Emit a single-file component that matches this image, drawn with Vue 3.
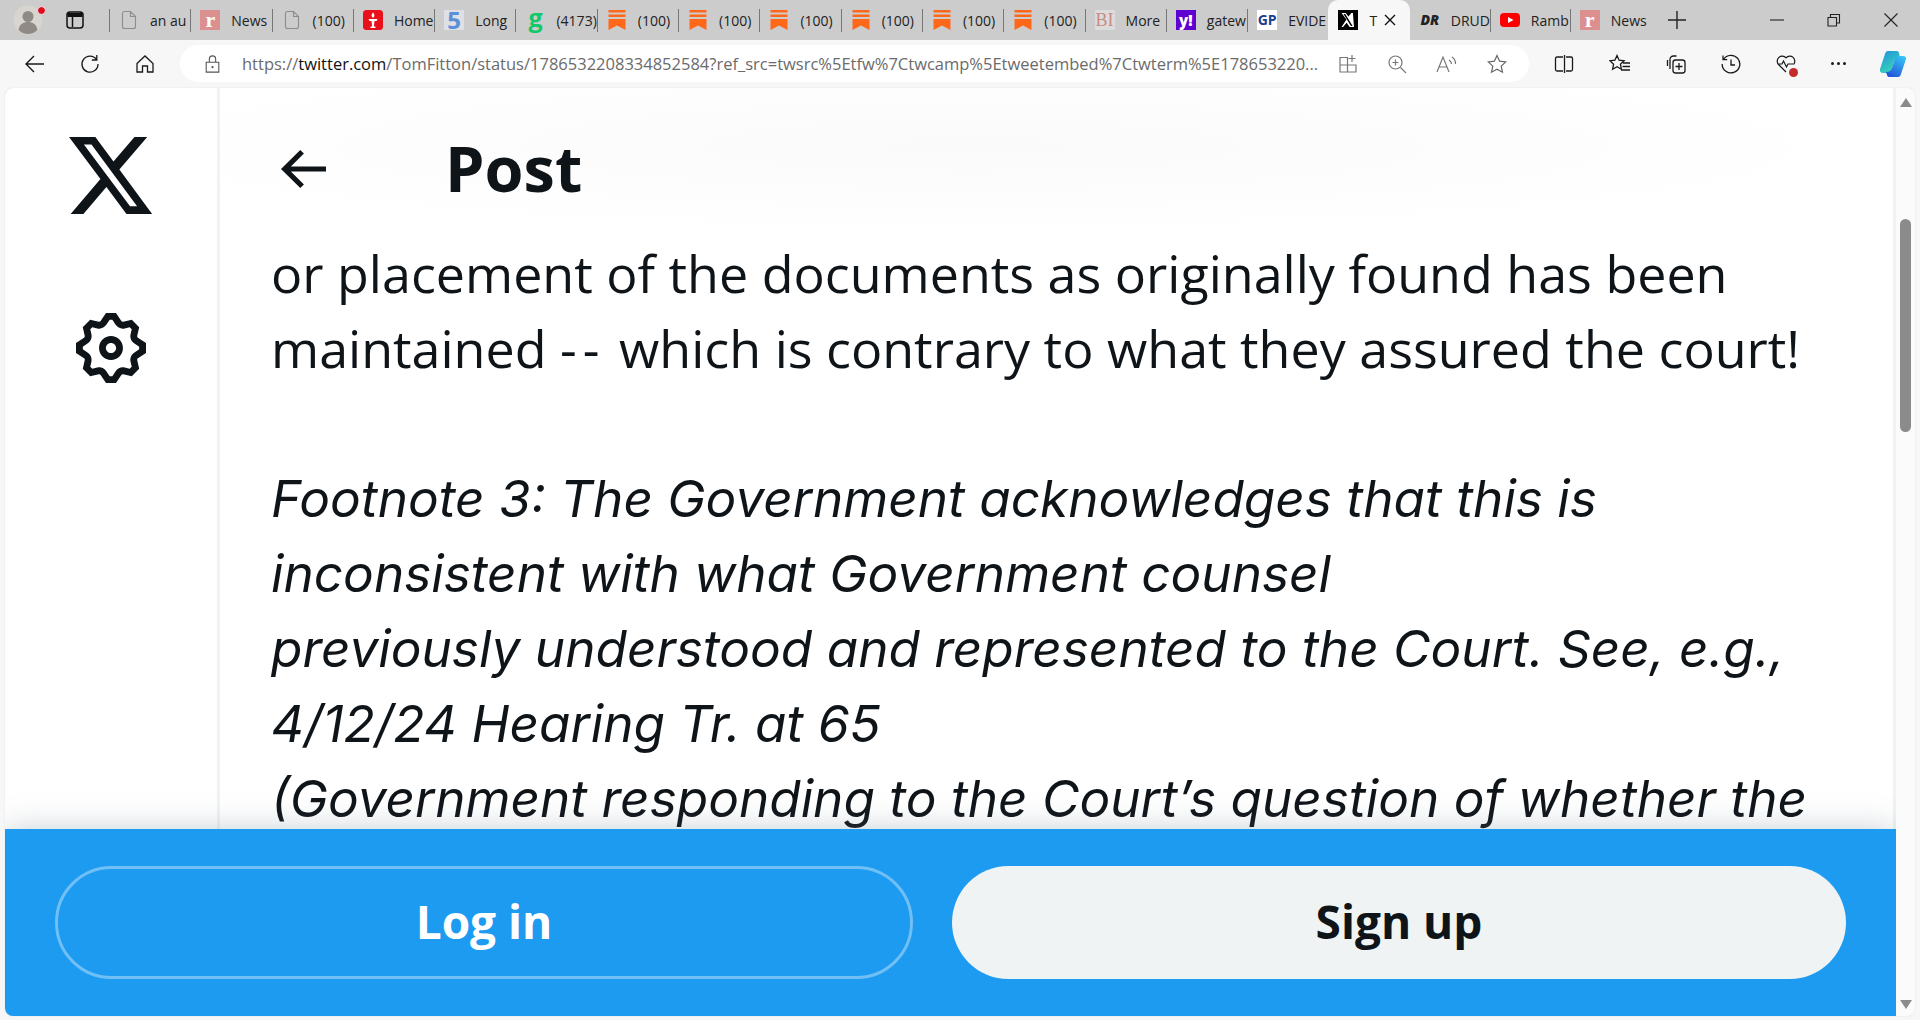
<template>
  <div class="win">
    <div class="tabs">
      <div class="tabs__lead">
        <div class="avatar">
          <svg viewBox="0 0 30 30" width="30" height="30">
            <circle cx="15" cy="15" r="14.5" fill="#d8d5d0" />
            <circle cx="15" cy="11.5" r="5.5" fill="#8f8a85" />
            <path d="M5.5 25c1-6 5-8 9.500-8s8.500 2 9.500 8c-2.500 2.600-6 4-9.500 4s-7-1.400-9.500-4z" fill="#8f8a85" />
          </svg>
          <span class="avatar__dot"></span>
        </div>
        <svg class="tabs__side" viewBox="0 0 20 20" width="20" height="20">
          <rect x="2" y="2" width="16" height="16" rx="3" fill="none" stroke="#111" stroke-width="1.500" />
          <path d="M2.500 3h15v4h-15z" fill="#111" />
          <path d="M7.500 7v10" stroke="#111" stroke-width="1.500" />
        </svg>
      </div>

      <div
        v-for="tab in tabs"
        :key="tab.id"
        :class="['tab', tab.active ? 'tab--active' : '', tab.tail ? 'tab--tail' : '']"
      >
        <span :class="['fav', 'fav--' + tab.icon]">
          <svg v-if="tab.icon === 'doc'" viewBox="0 0 20 20" width="20" height="20">
            <path d="M3.500 3.500a2 2 0 0 1 2-2h6l5 5v10a2 2 0 0 1-2 2h-9a2 2 0 0 1-2-2z M11.500 1.500v5h5" fill="none" stroke="#8c8c8c" stroke-width="1.100" />
          </svg>
          <svg v-else-if="tab.icon === 'torch'" viewBox="0 0 20 20" width="20" height="20">
            <rect width="20" height="20" rx="3.500" fill="#e8101a" />
            <path d="M10 2.500c1.800 2 2 3.500 0 5.500-2-2-1.800-3.500 0-5.500z" fill="#fff" />
            <path d="M5.500 9h9l-1 2h-2l-.6 5.500h1.600V18H7.500v-1.500h1.600l-.6-5.500h-2z" fill="#fff" />
          </svg>
          <svg v-else-if="tab.icon === 'sub'" viewBox="0 0 20 20" width="20" height="20">
            <path d="M1.500 0h17v2.500h-17zM1.500 4.500h17V7h-17zM1.500 9h17v11l-8.500-4.500L1.500 20z" fill="#ff6719" />
          </svg>
          <svg v-else-if="tab.icon === 'x'" viewBox="0 0 20 20" width="20" height="20">
            <rect width="20" height="20" fill="#000" />
            <path d="M14.900 3h-1.500l-3 3.600L7.800 3H3.500l4.900 6.600L3.600 17h1.500l3.500-4.200 3.100 4.200h4.300zM5.500 4h1.800l7.300 12h-1.700z" fill="#fff" />
          </svg>
          <svg v-else-if="tab.icon === 'yt'" viewBox="0 0 20 20" width="20" height="20">
            <rect y="3" width="20" height="14" rx="4" fill="#f00" />
            <path d="M8 7l5.500 3L8 13z" fill="#fff" />
          </svg>
          <template v-else>{{ tab.glyph }}</template>
        </span>
        <span class="tab__title">{{ tab.title }}</span>
        <svg v-if="tab.active" class="tab__close" viewBox="0 0 12 12" width="12" height="12">
          <path d="M1 1l10 10M11 1L1 11" stroke="#111" stroke-width="1.400" />
        </svg>
      </div>

      <svg class="tabs__new" viewBox="0 0 18 18" width="18" height="18">
        <path d="M9 0v18M0 9h18" stroke="#222" stroke-width="1.400" />
      </svg>

      <div class="winctl">
        <svg viewBox="0 0 14 14" width="14" height="14"><path d="M0 7h14" stroke="#222" stroke-width="1.100" /></svg>
        <svg viewBox="0 0 14 14" width="14" height="14"><path d="M1 4.500h8.500v8.500H1zM3.500 4.500V1.500h9v8.500h-3" fill="none" stroke="#222" stroke-width="1.100" /></svg>
        <svg viewBox="0 0 14 14" width="14" height="14"><path d="M.5.500l13 13M13.500.500l-13 13" stroke="#222" stroke-width="1.100" /></svg>
      </div>
    </div>

    <div class="toolbar">
      <div class="toolbar__nav">
        <svg viewBox="0 0 20 20" width="20" height="20"><path d="M1 10h18M9 2l-8 8 8 8" fill="none" stroke="#1a1a1a" stroke-width="1.400" /></svg>
        <svg viewBox="0 0 20 20" width="20" height="20"><path d="M16.500 5.500A8 8 0 1 0 18 10M16.800 1v5h-5" fill="none" stroke="#1a1a1a" stroke-width="1.300" /></svg>
        <svg viewBox="0 0 20 20" width="20" height="20"><path d="M2 9.500L10 2l8 7.500V18h-5.500v-6h-5v6H2z" fill="none" stroke="#1a1a1a" stroke-width="1.300" /></svg>
      </div>
      <div class="addr">
        <svg class="addr__lock" viewBox="0 0 16 20" width="15" height="18">
          <path d="M1 8h14v11H1zM4.500 8V4.500a3.500 3.500 0 0 1 7 0V8" fill="none" stroke="#555" stroke-width="1.200" />
          <circle cx="8" cy="13.500" r="1.200" fill="#555" />
        </svg>
        <span class="addr__url">https://<b>twitter.com</b>/TomFitton/status/1786532208334852584?ref_src=twsrc%5Etfw%7Ctwcamp%5Etweetembed%7Ctwterm%5E178653220...</span>
        <div class="addr__icons">
          <svg viewBox="0 0 20 20" width="20" height="20"><path d="M2 3.500h7.500V18H2zM9.500 11H18v7H9.500zM2 11h7.500M14 1v7M10.500 4.500h7" fill="none" stroke="#777" stroke-width="1.200" /></svg>
          <svg viewBox="0 0 20 20" width="20" height="20"><circle cx="8.500" cy="8.500" r="6.500" fill="none" stroke="#777" stroke-width="1.200" /><path d="M13.500 13.500l5.500 5.500M8.500 5.500v6M5.500 8.500h6" stroke="#777" stroke-width="1.200" /></svg>
          <svg viewBox="0 0 22 20" width="22" height="20"><path d="M1 18L7 3l6 15M3.200 13h7.600M13 6a5 5 0 0 1 2.500 4M16 3a8 8 0 0 1 3.500 7" fill="none" stroke="#777" stroke-width="1.200" /></svg>
          <svg viewBox="0 0 20 20" width="20" height="20"><path d="M10 1.500l2.600 5.700 6.200.7-4.600 4.200 1.300 6.100L10 15.200l-5.500 3 1.300-6.100L1.200 7.900l6.200-.7z" fill="none" stroke="#666" stroke-width="1.200" /></svg>
        </div>
      </div>
      <div class="toolbar__tools">
        <svg viewBox="0 0 20 20" width="20" height="20"><path d="M9 3H3a1.500 1.500 0 0 0-1.500 1.500v11A1.500 1.500 0 0 0 3 17h6M12 3h5a1.500 1.500 0 0 1 1.500 1.500v11A1.500 1.500 0 0 1 17 17h-5M10.500 1v18" fill="none" stroke="#1a1a1a" stroke-width="1.300" /></svg>
        <svg viewBox="0 0 22 20" width="22" height="20"><path d="M8 1.500l2.100 4.700 5 .6-3.700 3.400 1 5L8 12.700l-4.400 2.500 1-5L.9 6.800l5-.6zM14 9h7M13.500 12.500H21M12 16h9" fill="none" stroke="#1a1a1a" stroke-width="1.300" /></svg>
        <svg viewBox="0 0 20 20" width="20" height="20"><path d="M4 15V5.500A3.500 3.500 0 0 1 7.500 2h3M1.500 12V6" fill="none" stroke="#1a1a1a" stroke-width="1.300" /><rect x="7" y="6" width="12" height="13" rx="2.500" fill="none" stroke="#1a1a1a" stroke-width="1.300" /><path d="M13 9v7M9.500 12.500h7" stroke="#1a1a1a" stroke-width="1.300" /></svg>
        <svg viewBox="0 0 20 20" width="20" height="20"><path d="M2.500 5.500A8.800 8.800 0 1 1 1.200 10M2 1.500v4.200h4.200M10 5.500V11h4" fill="none" stroke="#1a1a1a" stroke-width="1.300" /></svg>
        <div class="health">
          <svg viewBox="0 0 20 20" width="20" height="20"><path d="M10 18L2.500 10.500a5 5 0 0 1 7.500-6.700 5 5 0 0 1 7.500 6.700M1.500 10H6l1.500-3 3 6 1.500-3h5" fill="none" stroke="#1a1a1a" stroke-width="1.200" /></svg>
          <span class="health__dot"></span>
        </div>
        <span class="dots">
          <i></i><i></i><i></i>
        </span>
      </div>
      <svg class="copilot" viewBox="0 0 28 28" width="28" height="28">
        <defs>
          <linearGradient id="cpa" x1="0" y1="0" x2="0.600" y2="1">
            <stop offset="0" stop-color="#1f8de0" />
            <stop offset="1" stop-color="#3ad9b5" />
          </linearGradient>
          <linearGradient id="cpb" x1="0.200" y1="1" x2="0.800" y2="0">
            <stop offset="0" stop-color="#2352d8" />
            <stop offset="1" stop-color="#35c4f5" />
          </linearGradient>
        </defs>
        <path d="M9 1h9c1 0 1.700.8 2 2l1 5c-3 0-5 1-6 4l-3 9c-.6 1.500-1.500 2-3 2H4C1.500 23 .5 21 1 19L6 4c.5-1.800 1.500-3 3-3z" fill="url(#cpa)" />
        <path d="M19 27h-9c-1 0-1.700-.8-2-2l-1-3c3 0 5-1 6-4l3-9c.6-1.500 1.500-3 3-3h4.500C26 6 27.500 7 27 9l-5 15c-.5 1.800-1.500 3-3 3z" fill="url(#cpb)" />
      </svg>
    </div>

    <div class="page">
      <div class="page__main">
        <div class="page__body">
          <aside class="side">
            <svg class="side__logo" viewBox="1.250 2.250 21.800 19.500" width="84" height="77" preserveAspectRatio="none">
              <path d="M18.244 2.250h3.308l-7.227 8.260 8.502 11.240H16.170l-5.214-6.817L4.990 21.750H1.680l7.730-8.835L1.254 2.250H8.080l4.713 6.231zm-1.161 17.520h1.833L7.084 4.126H5.117z" fill="#0f1419" />
            </svg>
            <svg class="side__gear" viewBox="1.800 1.750 20.400 20.500" width="70" height="70">
              <path fill-rule="evenodd" d="M10.540 1.750h2.920l1.570 2.360c.11.170.320.250.530.210l2.530-.590 2.170 2.170-.580 2.540c-.050.200.040.410.210.530l2.360 1.570v2.920l-2.360 1.570c-.170.120-.260.330-.210.530l.580 2.540-2.170 2.170-2.530-.590c-.210-.040-.420.040-.530.210l-1.570 2.360h-2.920l-1.580-2.360c-.110-.170-.320-.250-.520-.210l-2.540.590-2.170-2.170.580-2.540c.050-.200-.030-.410-.210-.530l-2.350-1.570v-2.920L4.100 8.970c.180-.120.260-.330.210-.530L3.730 5.900 5.900 3.730l2.540.590c.200.040.410-.040.520-.210l1.580-2.360zm1.070 2l-.980 1.470C10.050 6.080 9 6.500 7.990 6.270l-1.460-.340-.600.600.330 1.460c.240 1.010-.180 2.070-1.050 2.640l-1.460.980v.780l1.460.980c.870.570 1.290 1.630 1.050 2.640l-.330 1.460.600.600 1.460-.340c1.010-.230 2.060.190 2.640 1.050l.980 1.470h.780l.970-1.470c.580-.860 1.630-1.280 2.650-1.050l1.450.340.610-.600-.340-1.460c-.230-1.010.180-2.070 1.050-2.640l1.470-.980v-.780l-1.470-.980c-.870-.570-1.280-1.630-1.050-2.640l.340-1.460-.610-.600-1.450.340c-1.020.230-2.070-.190-2.650-1.050l-.970-1.470h-.780zM12 10.500c.820 0 1.500.670 1.500 1.500s-.680 1.500-1.500 1.500c-.830 0-1.500-.670-1.500-1.500s.670-1.500 1.500-1.500zM8.500 12c0-1.930 1.560-3.500 3.500-3.500 1.930 0 3.500 1.570 3.500 3.500s-1.570 3.500-3.500 3.500c-1.940 0-3.500-1.570-3.500-3.500z" fill="#0f1419" />
            </svg>
          </aside>

          <main class="post">
            <header class="post__head">
              <svg class="post__back" viewBox="3.586 4.540 17.414 14.920" width="45" height="38" preserveAspectRatio="none">
                <path d="M7.414 13l5.043 5.040-1.414 1.420L3.586 12l7.457-7.460 1.414 1.420L7.414 11H21v2H7.414z" fill="#0f1419" />
              </svg>
              <h1 class="post__title">Post</h1>
            </header>
            <div class="post__text">
              <p>or placement of the documents as originally found has been<br />maintained <span class="post__dash">--</span> which is contrary to what they assured the court!</p>
              <p class="post__quote">Footnote 3: The Government acknowledges that this is<br />inconsistent with what Government counsel<br />previously understood and represented to the Court. See, e.g.,<br />4/12/24 Hearing Tr. at 65<br />(Government responding to the Court’s question of whether the</p>
            </div>
          </main>
        </div>

        <div class="cta">
          <button type="button" class="cta__btn cta__btn--login">Log in</button>
          <button type="button" class="cta__btn cta__btn--signup">Sign up</button>
        </div>
      </div>

      <div class="scroll">
        <span class="scroll__arrow scroll__arrow--up"></span>
        <span class="scroll__thumb"></span>
        <span class="scroll__arrow scroll__arrow--down"></span>
      </div>
    </div>
  </div>
</template>

<script setup>
const tabs = [
  { id: 1, icon: 'doc', title: 'an au' },
  { id: 2, icon: 'r', glyph: 'r', title: 'News' },
  { id: 3, icon: 'doc', title: '(100)' },
  { id: 4, icon: 'torch', title: 'Home' },
  { id: 5, icon: 'five', glyph: '5', title: 'Long' },
  { id: 6, icon: 'g', glyph: 'g', title: '(4173)' },
  { id: 7, icon: 'sub', title: '(100)' },
  { id: 8, icon: 'sub', title: '(100)' },
  { id: 9, icon: 'sub', title: '(100)' },
  { id: 10, icon: 'sub', title: '(100)' },
  { id: 11, icon: 'sub', title: '(100)' },
  { id: 12, icon: 'sub', title: '(100)' },
  { id: 13, icon: 'bi', glyph: 'BI', title: 'More' },
  { id: 14, icon: 'yahoo', glyph: 'y!', title: 'gatew' },
  { id: 15, icon: 'gp', glyph: 'GP', title: 'EVIDE' },
  { id: 16, icon: 'x', title: 'T', active: true },
  { id: 17, icon: 'dr', glyph: 'DR', title: 'DRUD', tail: true },
  { id: 18, icon: 'yt', title: 'Ramb', tail: true },
  { id: 19, icon: 'r', glyph: 'r', title: 'News', tail: true },
]
</script>

<style>
html,
body {
  margin: 0;
  overflow: hidden;
}
</style>

<style scoped>
.win {
  height: 1020px;
  display: flex;
  flex-direction: column;
  background: #f7f7f7;
  font-family: "Open Sans", "Liberation Sans", sans-serif;
  color: #0f1419;
}

.tabs {
  height: 40px;
  flex: none;
  display: flex;
  align-items: center;
  background: #cccccc;
}

.tabs__lead {
  width: 109px;
  height: 100%;
  flex: none;
  display: flex;
  align-items: center;
  padding-left: 13px;
  box-sizing: border-box;
}

.tabs__side {
  margin-left: 22px;
}

.avatar {
  position: relative;
  width: 30px;
  height: 30px;
}

.avatar__dot {
  position: absolute;
  top: 1px;
  right: -3px;
  width: 7px;
  height: 7px;
  border-radius: 50%;
  background: #e00b1c;
  border: 1px solid #eee;
}

.tab {
  width: 81.300px;
  height: 100%;
  flex: none;
  box-sizing: border-box;
  display: flex;
  align-items: center;
  padding-left: 10px;
  position: relative;
}

.tab::before {
  content: "";
  position: absolute;
  left: 0;
  top: 9px;
  bottom: 8px;
  width: 1px;
  background: #777;
}

.tab--tail {
  width: 80px;
}

.tab--active {
  background: #f7f7f7;
  border-radius: 10px 10px 0 0;
}

.tab--active::before,
.tab--active + .tab::before {
  display: none;
}

.tab__title {
  margin-left: 11px;
  font-size: 14px;
  white-space: nowrap;
  color: #222;
}

.tab__close {
  position: absolute;
  right: 14px;
  top: 14px;
}

.fav {
  width: 20px;
  height: 20px;
  flex: none;
  display: flex;
  align-items: center;
  justify-content: center;
  line-height: 20px;
  font-size: 13px;
  font-weight: 700;
}

.fav--r {
  background: #dc8f8f;
  color: #fff;
  font-family: "Liberation Serif", serif;
  font-size: 22px;
}

.fav--five {
  background: #dfe0e6;
  color: #5b8fd8;
  font-size: 24px;
}

.fav--g {
  color: #10c969;
  font-size: 25px;
  padding-bottom: 6px;
  box-sizing: border-box;
}

.fav--bi {
  background: #dcdcdc;
  color: #c98b84;
  font-family: "Liberation Serif", serif;
  font-weight: 400;
  font-size: 18px;
}

.fav--yahoo {
  background: #5f01d1;
  color: #fff;
  font-size: 15px;
  font-weight: 800;
}

.fav--gp {
  background: #fff;
  color: #1c3f8f;
  font-size: 14px;
}

.fav--dr {
  color: #222;
  font-style: italic;
  font-weight: 800;
  font-size: 14px;
}

.tabs__new {
  margin-left: 18px;
}

.winctl {
  margin-left: auto;
  display: flex;
  gap: 43px;
  padding-right: 22px;
}

.toolbar {
  height: 48px;
  flex: none;
  display: flex;
  align-items: center;
  box-sizing: border-box;
  padding-bottom: 1px;
}

.toolbar__nav {
  width: 180px;
  flex: none;
  display: flex;
  gap: 35px;
  padding-left: 25px;
  box-sizing: border-box;
}

.addr {
  width: 1349px;
  height: 37px;
  flex: none;
  display: flex;
  align-items: center;
  background: #fff;
  border-radius: 19px;
  padding-left: 25px;
  box-sizing: border-box;
}

.addr__url {
  margin-left: 22px;
  width: 1077px;
  flex: none;
  font-size: 16.500px;
  white-space: nowrap;
  color: #6b6b6b;
}

.addr__url b {
  font-weight: 400;
  color: #111;
}

.addr__icons {
  display: flex;
  align-items: center;
  gap: 29px;
  margin-left: 19px;
}

.toolbar__tools {
  display: flex;
  align-items: center;
  gap: 35px;
  margin-left: 25px;
}

.health {
  position: relative;
  height: 20px;
}

.health__dot {
  position: absolute;
  right: -2px;
  bottom: -3px;
  width: 9px;
  height: 9px;
  border-radius: 50%;
  background: #c42b2b;
}

.dots {
  display: flex;
  gap: 3px;
  width: 20px;
}

.dots i {
  width: 3px;
  height: 3px;
  border-radius: 50%;
  background: #1a1a1a;
}

.copilot {
  margin-left: 28px;
}

.page {
  flex: 1;
  display: flex;
  margin: 0 5px 4px;
  background: #fff;
  border-radius: 8px;
  overflow: hidden;
  box-shadow: 0 0 1px rgba(0, 0, 0, 0.25);
}

.page__main {
  flex: 1;
  min-width: 0;
  display: flex;
  flex-direction: column;
}

.page__body {
  height: 741px;
  flex: none;
  display: flex;
  overflow: hidden;
}

.side {
  width: 215px;
  flex: none;
  box-sizing: border-box;
  border-right: 3px solid #eff3f4;
  display: flex;
  flex-direction: column;
  align-items: center;
  padding-top: 49px;
}

.side__gear {
  margin-top: 99px;
}

.post {
  flex: 1;
  min-width: 0;
  border-right: 3px solid #eff3f4;
}

.post__head {
  height: 147px;
  display: flex;
  align-items: center;
  padding: 14px 0 0 61px;
  box-sizing: border-box;
  background: radial-gradient(ellipse at 45% 40%, #fafafa, #fff 70%);
}

.post__title {
  margin: -2px 0 0 119px;
  font-size: 63px;
  line-height: 70px;
  font-weight: 700;
}

.post__text {
  padding-left: 51px;
  font-size: 52px;
  line-height: 75px;
  white-space: nowrap;
}

.post__text p {
  margin: 0 0 76px;
}

.post__dash {
  letter-spacing: 6px;
}

.post__quote {
  font-family: Inter, sans-serif;
  font-size: 51.300px;
  font-style: italic;
}

.cta {
  height: 187px;
  flex: none;
  box-sizing: border-box;
  display: grid;
  grid-template-columns: 858px 894px;
  gap: 39px;
  align-items: center;
  padding-left: 50px;
  background: #1d9bf0;
  position: relative;
  box-shadow: 0 0 30px rgba(101, 119, 134, 0.35);
}

.cta__btn {
  height: 113px;
  border-radius: 57px;
  padding: 0 0 4px;
  font-family: "Open Sans", sans-serif;
  font-size: 46px;
  font-weight: 700;
  box-sizing: border-box;
  cursor: pointer;
}

.cta__btn--login {
  background: transparent;
  border: 3px solid #70bff5;
  color: #fff;
}

.cta__btn--signup {
  background: #eff3f4;
  border: none;
  color: #0f1419;
}

.scroll {
  width: 19px;
  flex: none;
  background: #fbfbfb;
  display: flex;
  flex-direction: column;
  align-items: center;
  padding: 10px 0 7px;
  box-sizing: border-box;
  position: relative;
}

.scroll__arrow {
  width: 0;
  height: 0;
  border-left: 6.500px solid transparent;
  border-right: 6.500px solid transparent;
}

.scroll__arrow--up {
  border-bottom: 9px solid #8b8b8b;
}

.scroll__arrow--down {
  border-top: 9px solid #8b8b8b;
  margin-top: auto;
}

.scroll__thumb {
  width: 11px;
  height: 213px;
  margin-top: 112px;
  border-radius: 6px;
  background: #8b8b8b;
}
</style>
